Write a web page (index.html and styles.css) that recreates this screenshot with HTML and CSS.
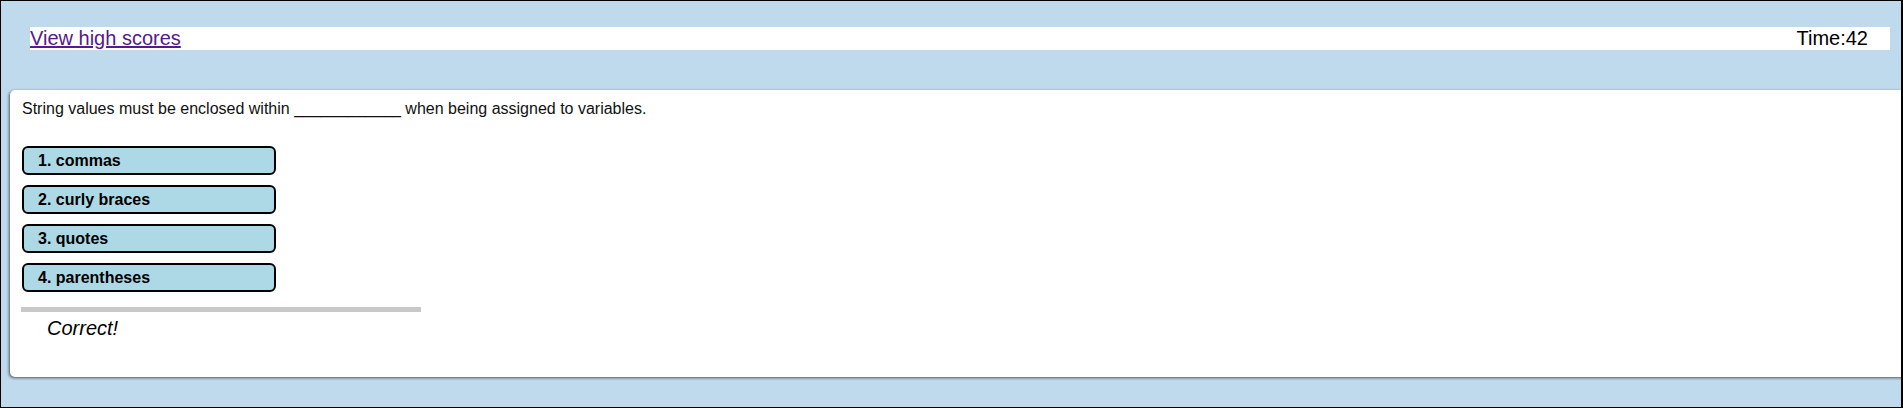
FILE: index.html
```html
<!DOCTYPE html>
<html lang="en">
<head>
<meta charset="utf-8">
<title>Code Quiz</title>
<link rel="stylesheet" href="styles.css">
</head>
<body>
<div class="page">
  <header class="topbar">
    <a class="scores-link" href="#">View high scores</a>
    <span class="timer">Time:42</span>
  </header>
  <main class="card">
    <p class="question">String values must be enclosed within ____________ when being assigned to variables.</p>
    <div class="answers">
      <button class="answer">1. commas</button>
      <button class="answer">2. curly braces</button>
      <button class="answer">3. quotes</button>
      <button class="answer">4. parentheses</button>
    </div>
    <hr class="divider">
    <p class="feedback">Correct!</p>
  </main>
</div>
</body>
</html>
```
FILE: styles.css
```css
html, body {
  margin: 0;
  padding: 0;
}
body {
  font-family: Arial, "Liberation Sans", sans-serif;
}
.page {
  box-sizing: border-box;
  height: 408px;
  border: 1px solid #000;
  border-right-width: 2px;
  background: #bfd9ed;
  overflow: hidden;
  display: flex;
  flex-direction: column;
}
.topbar {
  margin: 26px 11px 0 29px;
  height: 23px;
  background: #fff;
  display: flex;
  justify-content: space-between;
  align-items: center;
  font-size: 20px;
  line-height: 23px;
  padding-right: 22px;
}
.scores-link {
  color: #551a8b;
  text-decoration: underline;
}
.timer {
  color: #000;
}
.card {
  margin: 40px -10px 0 9px;
  height: 287px;
  box-sizing: border-box;
  background: #fff;
  border-radius: 5px;
  box-shadow: -1px 1px 3px rgba(0, 0, 0, 0.6);
  padding: 10px 12px 0 12px;
  display: flex;
  flex-direction: column;
  align-items: flex-start;
}
.question {
  margin: 0;
  font-size: 16px;
  line-height: 18px;
  color: #111;
}
.answers {
  margin-top: 28px;
  display: flex;
  flex-direction: column;
  gap: 10px;
}
.answer {
  box-sizing: border-box;
  margin: 0;
  width: 254px;
  height: 29px;
  background: #add8e6;
  border: 2px solid #000;
  border-radius: 6px;
  padding: 3px 14px;
  text-align: left;
  font-family: Arial, "Liberation Sans", sans-serif;
  font-size: 16px;
  font-weight: bold;
  line-height: 19px;
  color: #000;
}
.divider {
  margin: 15px 0 0 -1px;
  width: 400px;
  height: 5px;
  border: 0;
  background: #c8c8c8;
}
.feedback {
  margin: 5px 0 0 25px;
  font-size: 20px;
  line-height: 23px;
  font-style: italic;
  color: #000;
}
```
